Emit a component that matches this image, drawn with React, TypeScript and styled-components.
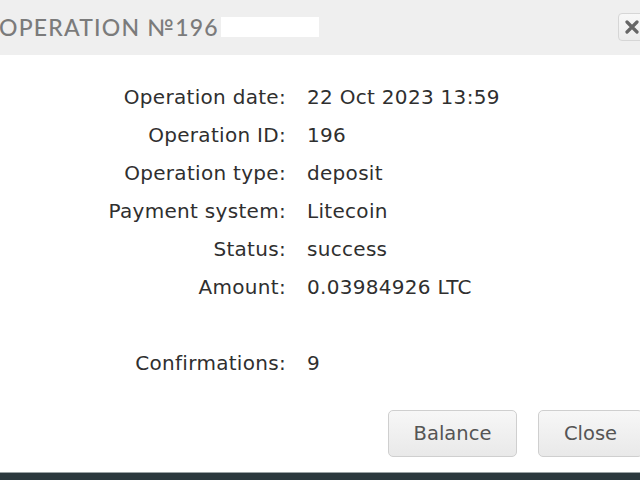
import React from "react";
import styled, { createGlobalStyle } from "styled-components";

const Global = createGlobalStyle`
  html, body { margin: 0; padding: 0; background: #ffffff; overflow: hidden; }
  #root { width: 640px; height: 480px; }
`;

const Dialog = styled.div`
  width: 640px;
  height: 480px;
  display: flex;
  flex-direction: column;
  background: #ffffff;
  overflow: hidden;
`;

const Header = styled.div`
  height: 55px;
  flex: none;
  background: #efefef;
  display: flex;
  align-items: center;
  justify-content: space-between;
`;

const Title = styled.div`
  display: flex;
  align-items: center;
  margin-left: -1px;
  margin-top: -2px;
  font-family: Lato, "Noto Sans", sans-serif;
  font-size: 23px;
  font-weight: 500;
  letter-spacing: 1.2px;
  color: #7b7b7b;
  white-space: nowrap;
`;

const Redacted = styled.span`
  display: inline-block;
  width: 98px;
  height: 20px;
  background: #ffffff;
  margin-left: 2px;
`;

const CloseIcon = styled.button`
  width: 30px;
  height: 28px;
  margin-right: -8px;
  margin-top: -2px;
  border: 1px solid #d6d6d6;
  border-radius: 4px;
  background: linear-gradient(#f8f8f8, #ececec);
  padding: 0 0 0 6px;
  display: flex;
  align-items: center;
  justify-content: flex-start;
`;

const Body = styled.div`
  flex: 1;
  display: flex;
  flex-direction: column;
`;

const Info = styled.div`
  display: grid;
  grid-template-columns: 286px auto;
  column-gap: 21px;
  padding-top: 23px;
  font-family: "DejaVu Sans", sans-serif;
  font-size: 20px;
  letter-spacing: 0.3px;
  color: #2f2f2f;
`;

const Label = styled.div`
  text-align: right;
  height: 38px;
  line-height: 38px;
`;

const Value = styled.div`
  height: 38px;
  line-height: 38px;
`;

const Footer = styled.div`
  margin-top: auto;
  display: flex;
  justify-content: flex-end;
  gap: 21px;
  padding-bottom: 15px;
  margin-right: -3px;
`;

const Button = styled.button<{ $w: number }>`
  width: ${(p) => p.$w}px;
  height: 47px;
  border: 1px solid #cfcfcf;
  border-radius: 5px;
  background: linear-gradient(#f7f7f7, #e9e9e9);
  font-family: "DejaVu Sans", sans-serif;
  font-size: 19.5px;
  color: #555555;
  padding: 0;
`;

const BottomBar = styled.div`
  height: 7px;
  flex: none;
  border-top: 1px solid #9aa2a4;
  background: #2b383d;
`;

const rows: [string, string][] = [
  ["Operation date:", "22 Oct 2023 13:59"],
  ["Operation ID:", "196"],
  ["Operation type:", "deposit"],
  ["Payment system:", "Litecoin"],
  ["Status:", "success"],
  ["Amount:", "0.03984926 LTC"],
  ["", ""],
  ["Confirmations:", "9"],
];

export default function App() {
  return (
    <>
      <Global />
      <Dialog>
        <Header>
          <Title>
            OPERATION №196
            <Redacted />
          </Title>
          <CloseIcon aria-label="close">
            <svg width="14" height="14" viewBox="0 0 14 14">
              <path d="M2 2 L12 12 M12 2 L2 12" stroke="#666" strokeWidth="3.2" strokeLinecap="round" />
            </svg>
          </CloseIcon>
        </Header>
        <Body>
          <Info>
            {rows.map(([l, v], i) => (
              <React.Fragment key={i}>
                <Label>{l}</Label>
                <Value>{v}</Value>
              </React.Fragment>
            ))}
          </Info>
          <Footer>
            <Button $w={129}>Balance</Button>
            <Button $w={105}>Close</Button>
          </Footer>
        </Body>
        <BottomBar />
      </Dialog>
    </>
  );
}
